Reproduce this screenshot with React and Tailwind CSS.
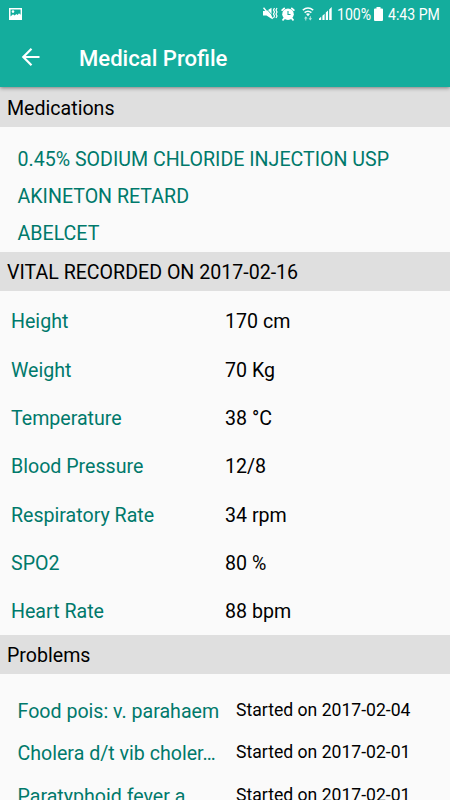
const medications = ['0.45% SODIUM CHLORIDE INJECTION USP', 'AKINETON RETARD', 'ABELCET'];

const vitals = [
  { label: 'Height', value: '170 cm' },
  { label: 'Weight', value: '70 Kg' },
  { label: 'Temperature', value: '38 °C' },
  { label: 'Blood Pressure', value: '12/8' },
  { label: 'Respiratory Rate', value: '34 rpm' },
  { label: 'SPO2', value: '80 %' },
  { label: 'Heart Rate', value: '88 bpm' }
];

const problems = [
  { id: 1, name: 'Food pois: v. parahaem', started: '2017-02-04' },
  { id: 2, name: 'Cholera d/t vib choler…', started: '2017-02-01' },
  { id: 3, name: 'Paratyphoid fever a', started: '2017-02-01' }
];

const ImageIcon = () => (
  <svg width="13" height="12" viewBox="0 0 13 12" className="shrink-0">
    <path fillRule="evenodd" fill="#fff" d="M0 0h13v12H0z M1.5 1.4v7L4 6.2l1.6 1.4L7.4 6l1.2 1L10 5.2l1.6 1.6V1.4z" />
    <circle cx="4" cy="3.6" r="1.3" fill="#fff" />
  </svg>
);

const VibrateIcon = () => (
  <svg width="15" height="13" viewBox="0 0 15 13" fill="none" stroke="#fff">
    <path fill="#fff" stroke="none" d="M0 4h3.5L8.5.8v11L3.5 8.5H0z" />
    <path stroke="#14ad9d" strokeWidth=".8" d="M2 0l8 9.2" />
    <path strokeWidth="1.4" d="M.5 .8l9.2 10.9" />
    <path strokeWidth="1.2" d="M11.5 1l-1 2 1 2-1 2 1 2-1 2M14 1l-1 2 1 2-1 2 1 2-1 2" />
  </svg>
);

const AlarmIcon = () => (
  <svg width="14" height="14" viewBox="0 0 14 14" fill="none" stroke="#fff">
    <circle cx="7" cy="7.2" r="5.8" fill="#fff" stroke="none" />
    <path strokeWidth="1.8" strokeLinecap="round" d="M1.2 3.2l2-1.8M12.8 3.2l-2-1.8M3 11.6l-1 1.2M11 11.6l1 1.2" />
    <path stroke="#14ad9d" strokeWidth="1.1" d="M7 4v3.5h2.5" />
  </svg>
);

const WifiIcon = () => (
  <svg width="12" height="14" viewBox="0 0 12 14" fill="none" stroke="#fff">
    <path strokeWidth="1.5" d="M.8 3.2q5.2-4.2 10.4 0M2.6 5.6q3.4-2.8 6.8 0" />
    <path fill="#fff" stroke="none" d="M4 7q2-1.4 4 0L6 9.2z" />
    <path fill="#fff" fillOpacity=".7" stroke="none" d="M2 11.4l1.8-2.1 1.8 2.1H4.3v2H3.3v-2zM6.5 11.2l1.8 2.2 1.8-2.2H8.8v-2h-1v2z" />
  </svg>
);

const SignalIcon = () => (
  <svg width="13" height="13" viewBox="0 0 13 13" fill="#fff">
    <path d="M0 11.5L2.2 9.8V13H0zM3.4 8.7L5.6 6.7V13H3.4zM6.8 5.6L9 3.6V13H6.8zM10.2 2.4L12.7 0v13h-2.5z" />
  </svg>
);

const BatteryIcon = () => (
  <svg width="9" height="14" viewBox="0 0 9 14" fill="#fff">
    <path d="M2.5 0h4v1.5H8q1 0 1 1V13q0 1-1 1H1q-1 0-1-1V2.5q0-1 1-1h1.5z" />
  </svg>
);

const StatusBar = () => (
  <div className="flex h-[27px] items-center justify-between pr-2.5 pl-[9px]">
    <ImageIcon />
    <div className="flex items-center text-base leading-none">
      <VibrateIcon />
      <span className="ml-[3px]"><AlarmIcon /></span>
      <span className="ml-[7px]"><WifiIcon /></span>
      <span className="ml-[5px]"><SignalIcon /></span>
      <span className="ml-[5px] w-[34px] origin-left scale-x-[0.88] pt-0.5 whitespace-nowrap">100%</span>
      <span className="ml-[3px]"><BatteryIcon /></span>
      <span className="ml-[5px] w-[52px] origin-left scale-x-[0.88] pt-0.5 whitespace-nowrap">4:43 PM</span>
    </div>
  </div>
);

const SectionHeader = ({ title }) => (
  <h2 className="flex h-[39.5px] shrink-0 items-center bg-[#dfdfdf] pt-[4px] pl-[7px] text-black">{title}</h2>
);

const App = () => {
  return (
    <div className="flex h-[800px] w-[450px] flex-col overflow-hidden bg-[#fafafa] font-[Roboto,sans-serif] text-[19.6px] leading-7">
      <header className="relative h-[87px] shrink-0 bg-[#14ad9d] text-white shadow-[0_1px_4px_rgba(0,0,0,0.45)]">
        <StatusBar />
        <div className="flex h-[60px] items-center pl-[21px]">
          <svg width="20" height="20" viewBox="0 0 20 20" fill="none" stroke="#fff" strokeWidth="2.2">
            <path d="M18.5 10H2.5M10.5 1.8L2.3 10l8.2 8.2" />
          </svg>
          <h1 className="ml-[38px] pt-px text-[22.1px] font-medium">Medical Profile</h1>
        </div>
      </header>

      <SectionHeader title="Medications" />
      <ul className="flex h-[125px] shrink-0 flex-col pt-[15.2px] pl-[17.5px] text-[#00796b]">
        {medications.map((name) => (
          <li key={name} className="flex h-[37px] shrink-0 items-center">{name}</li>
        ))}
      </ul>

      <SectionHeader title="VITAL RECORDED ON 2017-02-16" />
      <div className="h-[343.5px] shrink-0 pt-[7.2px]">
        {vitals.map(({ label, value }) => (
          <div key={label} className="flex h-[48.33px] items-center pl-[11px]">
            <span className="w-[214px] text-[#00796b]">{label}</span>
            <span className="text-black">{value}</span>
          </div>
        ))}
      </div>

      <SectionHeader title="Problems" />
      <div className="pt-[17px]">
        {problems.map((problem) => (
          <div key={problem.id} className="flex h-[42.3px] items-center pl-[17.5px]">
            <span className="w-[218.5px] whitespace-nowrap text-[#00796b]">{problem.name}</span>
            <span className="pb-[4px] text-[17.6px] text-black">Started on {problem.started}</span>
          </div>
        ))}
      </div>
    </div>
  );
};

export default App;
